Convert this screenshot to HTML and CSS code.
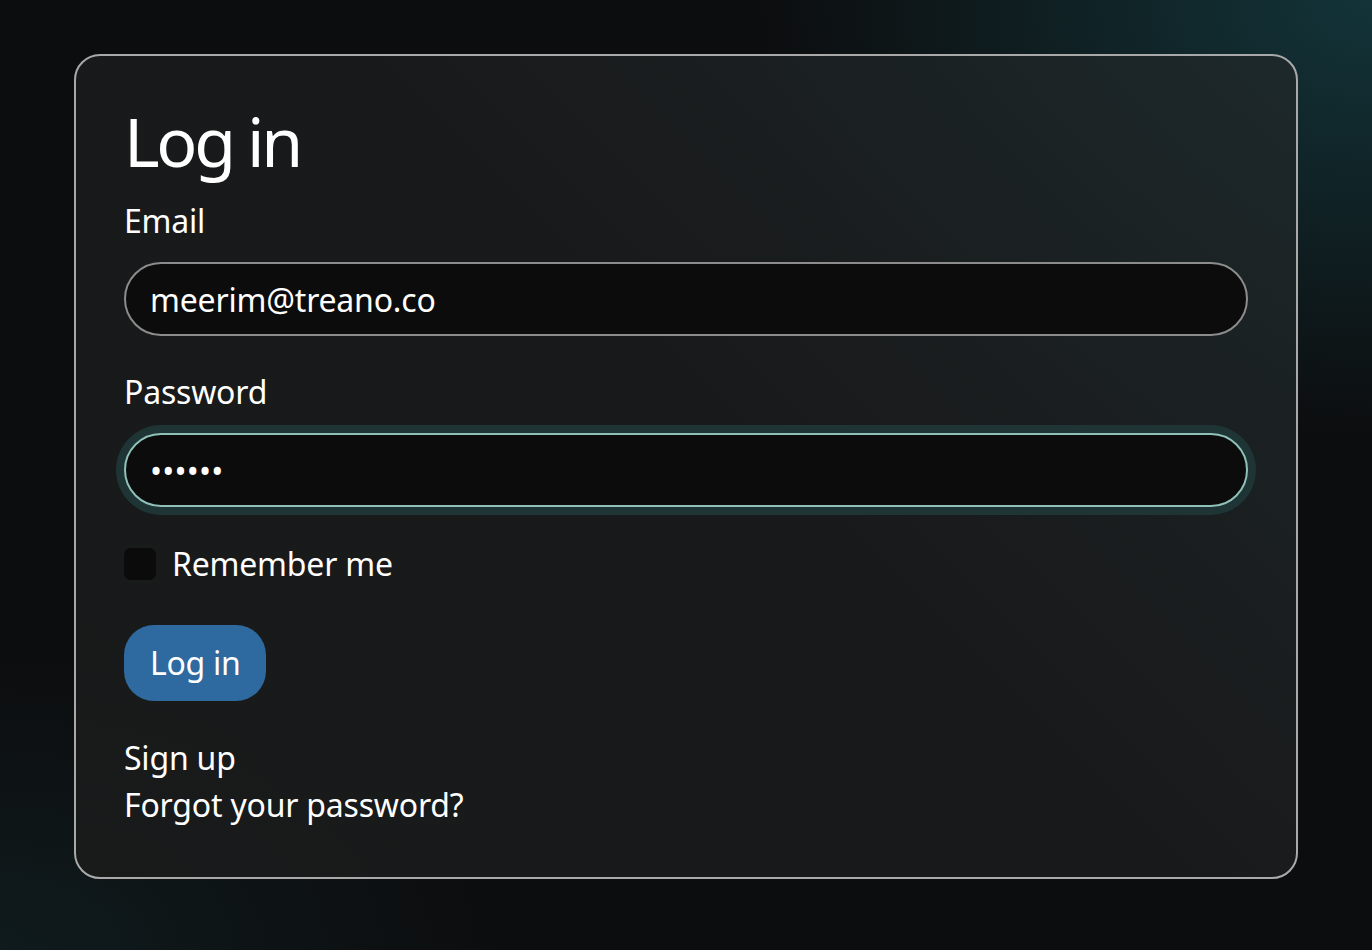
FILE: index.html
```html
<!DOCTYPE html>
<html lang="en">
<head>
<meta charset="utf-8">
<title>Log in</title>
<link rel="stylesheet" href="styles.css">
</head>
<body>
<main class="page">
  <section class="card">
    <h1 class="title">Log in</h1>
    <form class="form">
      <label class="label" for="email">Email</label>
      <input class="field" id="email" type="email" value="meerim@treano.co">
      <label class="label" for="password">Password</label>
      <input class="field field-focus" id="password" type="password" value="secret">
      <label class="check-row">
        <span class="checkbox"></span>
        <span class="check-text">Remember me</span>
      </label>
      <div class="actions">
        <button class="btn" type="button">Log in</button>
      </div>
    </form>
    <nav class="links">
      <a class="link" href="#">Sign up</a>
      <a class="link" href="#">Forgot your password?</a>
    </nav>
  </section>
</main>
</body>
</html>
```

FILE: styles.css
```css
* { box-sizing: border-box; }
html, body { height: 100%; }
body {
  margin: 0;
  font-family: "Noto Sans", "Open Sans", sans-serif;
  color: #ffffff;
  letter-spacing: -0.2px;
  background:
    radial-gradient(ellipse 620px 440px at 100% 0%, rgba(20, 58, 64, 0.85), rgba(20, 58, 64, 0) 100%),
    radial-gradient(ellipse 500px 300px at 0% 100%, rgba(18, 40, 44, 0.5), rgba(18, 40, 44, 0) 100%),
    #0c0d0e;
}
.page {
  padding: 54px 74px 0;
}
.card {
  border: 2px solid #a9a9a9;
  border-radius: 26px;
  padding: 46px 48px 49px 48px;
  background:
    linear-gradient(225deg, rgba(30, 40, 42, 0.9) 0%, rgba(26, 27, 28, 0.9) 45%, rgba(26, 27, 27, 0.9) 100%);
}
.title {
  margin: 0;
  font-size: 68px;
  font-weight: 400;
  line-height: 78px;
  letter-spacing: -3.3px;
}
.form {
  display: flex;
  flex-direction: column;
  align-items: flex-start;
}
.label {
  margin-top: 17px;
  font-size: 32px;
  line-height: 48px;
}
.field + .label { margin-top: 32px; }
.field {
  width: 100%;
  height: 74px;
  margin-top: 17px;
  padding: 0 24px;
  border: 2px solid #8c8c8c;
  border-radius: 37px;
  background: #0c0c0c;
  color: #ffffff;
  font-family: inherit;
  font-size: 32px;
  letter-spacing: -0.2px;
  outline: none;
}
.field-focus {
  border-color: #8fc1b9;
  box-shadow: 0 0 0 8px #1f3434;
  letter-spacing: 0.2px;
}
.check-row {
  display: flex;
  align-items: center;
  gap: 16px;
  margin-top: 33px;
  font-size: 32px;
  line-height: 48px;
}
.checkbox {
  width: 32px;
  height: 32px;
  border-radius: 7px;
  background: #0b0b0b;
}
.actions { margin-top: 37px; }
.btn {
  height: 76px;
  padding: 0 26px;
  border: none;
  border-radius: 30px;
  background: #2e69a0;
  color: #ffffff;
  font-family: inherit;
  font-size: 32px;
  line-height: 48px;
  letter-spacing: -0.3px;
}
.links {
  display: flex;
  flex-direction: column;
  margin-top: 33px;
}
.link {
  color: #ffffff;
  text-decoration: none;
  font-size: 32px;
  line-height: 47px;
}
```
